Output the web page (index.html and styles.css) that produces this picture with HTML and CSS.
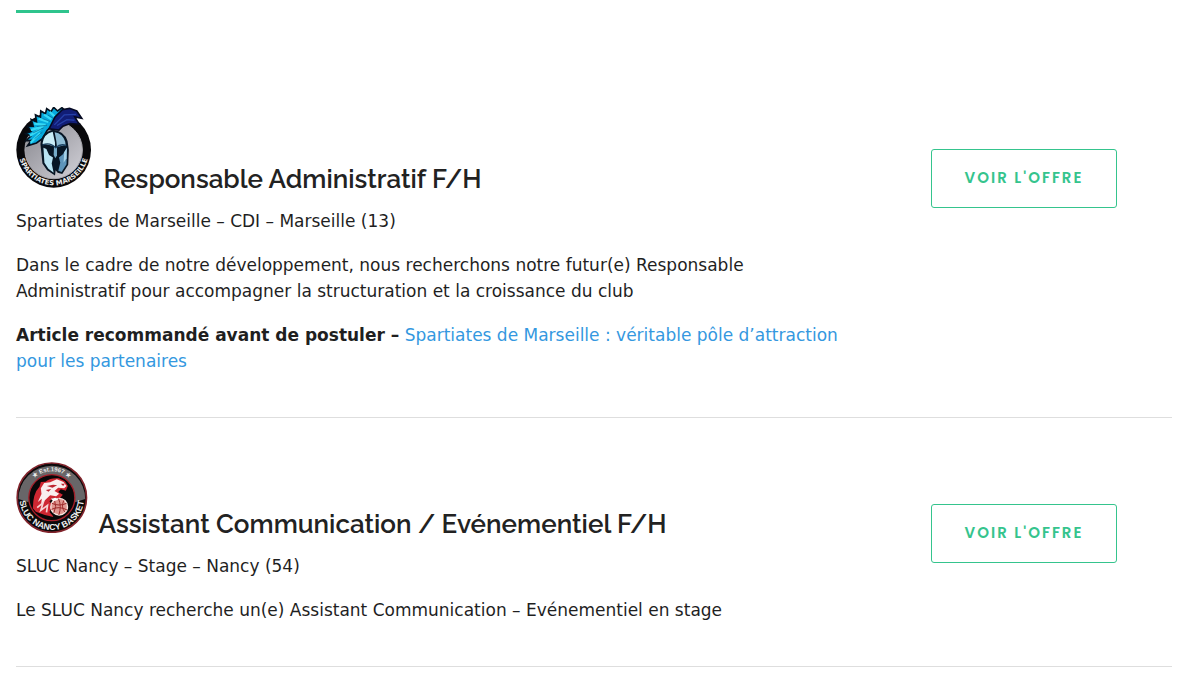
FILE: index.html
```html
<!DOCTYPE html>
<html lang="fr">
<head>
    <meta charset="UTF-8">
    <meta name="viewport" content="width=device-width, initial-scale=1.0">
    <title>Offres d'emploi</title>
    <link rel="stylesheet" href="styles.css">
</head>
<body>
    <main class="offers">
        <div class="title-bar"></div>

        <article class="offer">
            <div class="offer-text">
                <h2>
                    <svg class="logo" width="76" height="81" viewBox="18 20 230 245" role="img" aria-label="Spartiates Marseille">
                        <defs>
                            <linearGradient id="silver" x1="0" y1="0" x2="1" y2="1">
                                <stop offset="0" stop-color="#85858c"/>
                                <stop offset="1" stop-color="#d2d1d8"/>
                            </linearGradient>
                            <path id="ring1" d="M25 148 A107 109 0 0 0 239 148"/>
                        </defs>
                        <ellipse cx="132" cy="150" rx="113" ry="114" fill="#08080b"/>
                        <ellipse cx="132" cy="150" rx="87" ry="87" fill="url(#silver)" stroke="#aaa9b0" stroke-width="3"/>
                        <path d="M53 137 L64 121 L48 122 L63 108 L47 101 L64 94 L53 79 L70 78 L64 58 L80 65 L77 44 L92 51 L93 32 L107 40 L111 25 L124 34 L132 21 L144 32 L157 22 L166 30 L154 55 L133 72 L112 91 L98 116 L80 129 Z" fill="#06a9dd" stroke="#05101e" stroke-width="5"/>
                        <path d="M62 128 L91 99 M60 107 L94 86 M63 90 L101 78 M73 70 L108 74 M86 55 L116 65 M103 43 L125 57 M120 35 L136 49" stroke="#36d9f5" stroke-width="7"/>
                        <path d="M74 116 L98 96 M70 98 L102 83 M81 79 L112 75 M98 55 L122 64 M114 44 L132 55" stroke="#075e87" stroke-width="2"/>
                        <path d="M118 86 L136 50 L158 28 L180 24 L202 32 L217 54 L196 50 L209 72 L182 70 L160 78 L148 90 Z" fill="#111d76" stroke="#060a22" stroke-width="5"/>
                        <path d="M134 74 L164 44 L200 42 M142 76 L172 58 L195 60" fill="none" stroke="#2540a8" stroke-width="4"/>
                        <g transform="translate(-14 5)">
                            <path d="M106 128 Q108 92 144 84 Q178 88 188 118 L192 145 L190 190 L172 218 L158 214 L152 206 L150 222 L126 206 L112 186 Z" fill="#071625"/>
                            <path d="M112 126 Q116 96 143 90 L150 122 L150 134 L122 128 Z" fill="#c9edf7"/>
                            <path d="M149 91 Q174 95 181 120 L182 130 L156 136 L154 118 Z" fill="#8dbbd3"/>
                            <path d="M115 138 L124 142 L132 160 L144 168 L140 186 L146 214 L130 202 L118 184 Z" fill="#b9e4f3"/>
                            <path d="M186 138 L185 188 L170 212 L160 208 L166 184 L162 168 L174 158 Z" fill="#5d94ba"/>
                            <path d="M186 138 L185 170 L176 184 L178 152 Z" fill="#a8d3e8"/>
                            <path d="M147 136 L156 136 L156 162 L151 170 L146 160 Z" fill="#76acca"/>
                            <path d="M112 130 Q134 120 152 138 Q168 124 184 132" fill="none" stroke="#1c4262" stroke-width="4"/>
                        </g>
                        <text class="ring-label ring-label-wide" font-size="21"><textPath href="#ring1" startOffset="50%">SPARTIATES MARSEILLE</textPath></text>
                    </svg>
                    Responsable Administratif F/H
                </h2>
                <p>Spartiates de Marseille – CDI – Marseille (13)</p>
                <p>Dans le cadre de notre développement, nous recherchons notre futur(e) Responsable Administratif pour accompagner la structuration et la croissance du club</p>
                <p><strong>Article recommandé avant de postuler –</strong> <a href="#">Spartiates de Marseille : véritable pôle d’attraction pour les partenaires</a></p>
            </div>
            <div class="offer-action">
                <a class="btn" href="#">Voir l'offre</a>
            </div>
        </article>

        <article class="offer">
            <div class="offer-text">
                <h2>
                    <svg class="logo" width="72" height="71" viewBox="17 19 215 213" role="img" aria-label="SLUC Nancy Basket">
                        <defs>
                            <path id="ring2" d="M27 126 A97 97 0 0 0 221 126"/>
                            <path id="ring3" d="M45 126 A79 79 0 0 1 203 126"/>
                        </defs>
                        <circle cx="124" cy="126" r="104" fill="#0b090a" stroke="#81242c" stroke-width="5"/>
                        <path d="M24 130 A100 100 0 0 1 224 130 L194 140 A71 71 0 0 0 54 140 Z" fill="#686668"/>
                        <circle cx="124" cy="126" r="69" fill="#080708" stroke="#a51f2a" stroke-width="4"/>
                        <path d="M67 158 Q67 113 87 93 L91 79 L105 78 Q119 66 145 68 L163 77 L172 91 L166 105 L151 101 L143 109 L157 117 L147 129 L128 127 L117 137 L126 151 L117 169 L130 184 L103 178 L76 168 Z" fill="#ce2732"/>
                        <path d="M91 98 L101 82 L119 80 L139 71 L159 79 L168 91 L161 98 L143 96 L132 106 L146 114 L137 122 L119 119 L104 133 L91 151 L94 129 L82 139 L93 115 Z" fill="#f9eeee"/>
                        <path d="M109 91 L128 87 L140 89 L126 96 Z M106 103 L122 100 L114 108 Z M151 84 L163 84 L158 91 Z" fill="#bd2430"/>
                        <path d="M80 156 L98 141 L91 164 L111 149 L108 170" fill="none" stroke="#f6d4d4" stroke-width="5"/>
                        <circle cx="146" cy="153" r="25" fill="#df9690" stroke="#f9e5df" stroke-width="4"/>
                        <path d="M124 143 Q146 153 168 143 M123 161 Q146 150 170 163 M144 129 Q154 151 145 178 M132 133 Q140 153 130 172 M160 134 Q150 155 164 170" fill="none" stroke="#9d2b2b" stroke-width="3"/>
                        <path d="M121 129 L135 126 L143 132 L129 137 Z" fill="#fff"/>
                        <text class="ring-label" font-size="26"><textPath href="#ring2" startOffset="50%">SLUC NANCY BASKET</textPath></text>
                        <text class="ring-label" font-size="18"><textPath href="#ring3" startOffset="50%">★ Est.1967 ★</textPath></text>
                    </svg>
                    Assistant Communication / Evénementiel F/H
                </h2>
                <p>SLUC Nancy – Stage – Nancy (54)</p>
                <p>Le SLUC Nancy recherche un(e) Assistant Communication – Evénementiel en stage</p>
            </div>
            <div class="offer-action">
                <a class="btn" href="#">Voir l'offre</a>
            </div>
        </article>
    </main>
</body>
</html>
```
FILE: styles.css
```css
body {
    margin: 0;
    background-color: #fff;
    color: #1f1f1f;
    font-family: Verdana, "DejaVu Sans", sans-serif;
    font-size: 17px;
    line-height: 26px;
}
.offers {
    padding: 10px 28px 0 16px;
}
.title-bar {
    width: 53px;
    height: 3px;
    margin-bottom: 50px;
    background-color: #2fc48d;
}
.offer {
    display: grid;
    grid-template-columns: minmax(0, 1fr) 296px;
    gap: 20px;
    padding: 44px 0 43px;
    border-bottom: 1px solid #dedede;
}
.offer h2 {
    margin: 0 0 16px;
    color: #222;
    font-family: Raleway, Inter, sans-serif;
    font-size: 26px;
    font-weight: 600;
    line-height: 26px;
}
.offer p {
    margin: 0 0 18px;
}
.offer p:last-child {
    margin-bottom: 0;
}
.offer p a {
    color: #3498e0;
    text-decoration: none;
}
.logo {
    margin-right: 5px;
    vertical-align: baseline;
}
.ring-label {
    fill: #eee;
    font-family: "Liberation Sans", sans-serif;
    font-weight: 700;
    text-anchor: middle;
}
.ring-label-wide {
    font-family: "DejaVu Sans", sans-serif;
}
.offer-action {
    padding-top: 42px;
    text-align: center;
}
.btn {
    display: inline-block;
    padding: 15px 33px 16px;
    border: 1px solid #35c48d;
    border-radius: 3px;
    color: #35c48d;
    font-family: Poppins, Inter, sans-serif;
    font-size: 15px;
    font-weight: 600;
    letter-spacing: 2px;
    text-decoration: none;
    text-transform: uppercase;
}
```
